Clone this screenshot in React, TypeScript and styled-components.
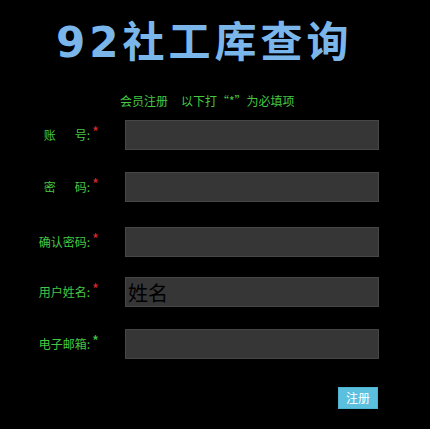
import styled, { createGlobalStyle } from "styled-components";

const GlobalStyle = createGlobalStyle`
  html, body {
    margin: 0;
    padding: 0;
    background: #000;
  }
  body {
    font-family: "Noto Sans CJK SC", "DejaVu Sans", sans-serif;
  }
`;

const Page = styled.div`
  width: 430px;
  height: 429px;
  background: #000;
  overflow: hidden;
`;

const Title = styled.h1`
  margin: 0;
  padding: 22px 0 0 56px;
  font-family: "DejaVu Sans", "Noto Sans CJK SC", sans-serif;
  font-size: 42px;
  font-weight: bold;
  line-height: 42px;
  letter-spacing: 4px;
  color: #7ab6ea;
  white-space: nowrap;
`;

const Subtitle = styled.div`
  margin-top: 29px;
  padding-left: 120px;
  font-size: 12px;
  line-height: 16px;
  color: #44c844;
  white-space: nowrap;
`;

const SubGap = styled.span`
  display: inline-block;
  width: 13px;
`;

const Form = styled.form`
  display: flex;
  flex-direction: column;
  padding-top: 11px;
`;

const Row = styled.div<{ $top: number }>`
  display: flex;
  align-items: center;
  margin-top: ${(p) => p.$top}px;
  height: 30px;
`;

const Label = styled.label`
  width: 99px;
  display: flex;
  justify-content: flex-end;
  align-items: center;
  font-size: 12px;
  line-height: 16px;
  color: #44c844;
  white-space: nowrap;
`;

const Gap = styled.span`
  display: inline-block;
  width: 19px;
`;

const Star = styled.sup<{ $green?: boolean }>`
  font-size: 15px;
  line-height: 1;
  margin-left: 2px;
  position: relative;
  top: -4px;
  vertical-align: baseline;
  color: ${(p) => (p.$green ? "#44c844" : "#d42a2a")};
`;

const Field = styled.input`
  box-sizing: border-box;
  width: 254px;
  height: 30px;
  margin-left: 26px;
  padding: 0 2px;
  background: #363636;
  border: 1px solid #474747;
  outline: none;
  font-family: "Noto Sans CJK SC", sans-serif;
  font-size: 20px;
  color: #000;
`;

const Actions = styled.div`
  display: flex;
  justify-content: flex-end;
  padding: 28px 52px 0 0;
`;

const SubmitButton = styled.button`
  box-sizing: border-box;
  width: 40px;
  height: 22px;
  padding: 0;
  background: #5bc0de;
  border: 1px solid #4fb3d2;
  color: #fff;
  font-family: "Noto Sans CJK SC", sans-serif;
  font-size: 12px;
  line-height: 20px;
  cursor: pointer;
`;

type FieldDef = {
  label: React.ReactNode;
  top: number;
  type?: string;
  value?: string;
  greenStar?: boolean;
};

const fields: FieldDef[] = [
  { label: <>账<Gap />号:</>, top: 0 },
  { label: <>密<Gap />码:</>, top: 22, type: "password" },
  { label: "确认密码:", top: 25, type: "password" },
  { label: "用户姓名:", top: 20, value: "姓名" },
  { label: "电子邮箱:", top: 22, greenStar: true },
];

export default function App() {
  return (
    <Page>
      <GlobalStyle />
      <Title>92社工库查询</Title>
      <Subtitle>
        会员注册<SubGap />以下打“*”为必填项
      </Subtitle>
      <Form onSubmit={(e) => e.preventDefault()}>
        {fields.map((f, i) => (
          <Row key={i} $top={f.top}>
            <Label>
              {f.label}
              <Star $green={f.greenStar}>*</Star>
            </Label>
            <Field type={f.type ?? "text"} defaultValue={f.value} />
          </Row>
        ))}
      </Form>
      <Actions>
        <SubmitButton type="button">注册</SubmitButton>
      </Actions>
    </Page>
  );
}
